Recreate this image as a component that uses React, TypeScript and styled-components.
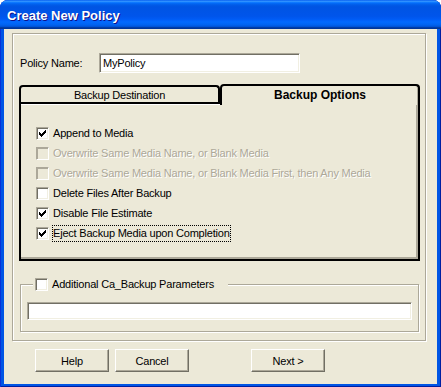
import React from 'react';
import styled, { createGlobalStyle } from 'styled-components';

const Global = createGlobalStyle`
  html, body { margin: 0; padding: 0; background: #fff; }
  body { font-family: "Liberation Sans", Arial, sans-serif; font-size: 11px; color: #000; letter-spacing: -0.2px; }
  * { box-sizing: border-box; }
`;

const Window = styled.div`
  width: 441px;
  height: 387px;
  display: flex;
  flex-direction: column;
  background: #0055e5;
  border-radius: 8px 8px 0 0;
  overflow: hidden;
  box-shadow: inset 1px 0 0 #0831d9, inset -1px 0 0 #001ea0, inset 0 -1px 0 #001ea0;
`;

const TitleBar = styled.div`
  height: 29px;
  flex: none;
  display: flex;
  align-items: center;
  padding: 1px 0 0 7px;
  color: #fff;
  font-family: "Liberation Sans", Arial, sans-serif;
  font-weight: 700;
  font-size: 13px;
  letter-spacing: 0;
  text-shadow: 1px 1px 0 #0f1089;
  background: linear-gradient(
    to bottom,
    #0058ee 0%,
    #3593ff 4%,
    #288eff 6%,
    #127dff 8%,
    #036ffc 10%,
    #0262ee 14%,
    #0057e5 20%,
    #0054e3 24%,
    #0055eb 56%,
    #005bf5 66%,
    #026afe 76%,
    #0062ef 86%,
    #0052d6 92%,
    #0040ab 94%,
    #003092 100%
  );
`;

const Body = styled.div`
  flex: 1;
  margin: 0 4px 3px 4px;
  background: #ece9d8;
  padding: 4px 11px 0 8px;
  display: flex;
  flex-direction: column;
`;

const Frame = styled.div`
  width: 414px;
  height: 308px;
  border: 1px solid #aca899;
  box-shadow: inset 1px 1px 0 #fff, 1px 1px 0 #fff;
  padding: 19px 6px 8px 6px;
  display: flex;
  flex-direction: column;
`;

const NameRow = styled.div`
  display: flex;
  align-items: center;
  height: 20px;
  padding-left: 1px;
  margin-bottom: 11px;
`;

const Label = styled.span`
  width: 79px;
  font-size: 11px;
`;

const TextBox = styled.div<{ $w: number; $h: number }>`
  width: ${p => p.$w}px;
  height: ${p => p.$h}px;
  background: #fff;
  border: 1px solid;
  border-color: #aca899 #fff #fff #aca899;
  box-shadow: inset 1px 1px 0 #716f64, inset -1px -1px 0 #f1efe2;
  padding: 0 3px;
  display: flex;
  align-items: center;
  font-size: 11px;
`;

const TabStrip = styled.div`
  display: grid;
  grid-template-columns: 201px 200px;
  align-items: end;
  height: 18px;
  position: relative;
  z-index: 1;
`;

const Tab = styled.div<{ $active?: boolean }>`
  height: ${p => (p.$active ? 21 : 17)}px;
  margin-bottom: ${p => (p.$active ? -3 : 0)}px;
  border: 2px solid #000;
  border-bottom: none;
  border-radius: 4px 4px 0 0;
  background: #ece9d8;
  display: flex;
  justify-content: center;
  align-items: ${p => (p.$active ? 'flex-start' : 'center')};
  padding-top: ${p => (p.$active ? 2 : 0)}px;
  font-weight: ${p => (p.$active ? 700 : 400)};
  font-size: ${p => (p.$active ? 12 : 11)}px;
  letter-spacing: ${p => (p.$active ? '0' : '-0.2px')};
  box-shadow: ${p => (p.$active ? 'inset -1px 0 0 #aca899' : 'none')};
`;

const Panel = styled.div`
  width: 401px;
  height: 159px;
  border: 2px solid #000;
  box-shadow: inset 0 1px 0 #fff, inset -2px -2px 0 #aca899;
  padding: 19px 0 0 15px;
  display: flex;
  flex-direction: column;
  margin-bottom: 23px;
`;

const CheckRow = styled.div`
  height: 20px;
  display: flex;
  align-items: center;
`;

const Box = styled.span<{ $disabled?: boolean }>`
  width: 13px;
  height: 13px;
  flex: none;
  background: ${p => (p.$disabled ? '#ece9d8' : '#fff')};
  border: 1px solid;
  border-color: #aca899 #fff #fff #aca899;
  box-shadow: ${p =>
    p.$disabled
      ? 'inset 1px 1px 0 #aca899, inset -1px -1px 0 #ece9d8'
      : 'inset 1px 1px 0 #716f64, inset -1px -1px 0 #f1efe2'};
  display: block;
  position: relative;
  svg { position: absolute; left: -1px; top: -1px; }
`;

const CheckText = styled.span<{ $disabled?: boolean; $focus?: boolean }>`
  margin-left: 3px;
  height: 17px;
  line-height: 15px;
  border: 1px dotted ${p => (p.$focus ? '#000' : 'transparent')};
  white-space: nowrap;
  font-size: 11px;
  color: ${p => (p.$disabled ? '#aca899' : '#000')};
  text-shadow: ${p => (p.$disabled ? '1px 1px 0 #fff' : 'none')};
`;

const Group = styled.div`
  width: 399px;
  height: 48px;
  margin-left: 1px;
  border: 1px solid #aca899;
  box-shadow: inset 1px 1px 0 #fff, 1px 1px 0 #fff;
  display: flex;
  flex-direction: column;
`;

const Legend = styled.div`
  align-self: flex-start;
  margin: -8px 0 0 12px;
  padding: 0 13px 0 2px;
  height: 15px;
  background: #ece9d8;
  display: flex;
  align-items: center;
  margin-bottom: 10px;
`;

const GroupInput = styled(TextBox)`
  margin-left: 6px;
`;

const ButtonRow = styled.div`
  display: flex;
  margin-top: 8px;
  padding-left: 23px;
`;

const Button = styled.div<{ $gap?: number }>`
  width: 74px;
  height: 23px;
  margin-left: ${p => p.$gap ?? 0}px;
  border: 1px solid;
  border-color: #fff #716f64 #716f64 #fff;
  box-shadow: inset -1px -1px 0 #aca899;
  background: #ece9d8;
  display: flex;
  align-items: center;
  justify-content: center;
  font-size: 11px;
`;

const CheckMark = () => (
  <svg width="13" height="13" viewBox="0 0 13 13" shapeRendering="crispEdges">
    <g fill="#000">
      <rect x="3" y="5" width="1" height="3" />
      <rect x="4" y="6" width="1" height="3" />
      <rect x="5" y="7" width="1" height="3" />
      <rect x="6" y="6" width="1" height="3" />
      <rect x="7" y="5" width="1" height="3" />
      <rect x="8" y="4" width="1" height="3" />
      <rect x="9" y="3" width="1" height="3" />
    </g>
  </svg>
);

type Opt = { label: string; checked?: boolean; disabled?: boolean; focus?: boolean };

const options: Opt[] = [
  { label: 'Append to Media', checked: true },
  { label: 'Overwrite Same Media Name, or Blank Media', disabled: true },
  { label: 'Overwrite Same Media Name, or Blank Media First, then Any Media', disabled: true },
  { label: 'Delete Files After Backup' },
  { label: 'Disable File Estimate', checked: true },
  { label: 'Eject Backup Media upon Completion', checked: true, focus: true },
];

export default function App() {
  return (
    <>
      <Global />
      <Window>
        <TitleBar>Create New Policy</TitleBar>
        <Body>
          <Frame>
            <NameRow>
              <Label>Policy Name:</Label>
              <TextBox $w={201} $h={20}>MyPolicy</TextBox>
            </NameRow>
            <TabStrip>
              <Tab>Backup Destination</Tab>
              <Tab $active>Backup Options</Tab>
            </TabStrip>
            <Panel>
              {options.map(o => (
                <CheckRow key={o.label}>
                  <Box $disabled={o.disabled}>{o.checked && <CheckMark />}</Box>
                  <CheckText $disabled={o.disabled} $focus={o.focus}>
                    {o.label}
                  </CheckText>
                </CheckRow>
              ))}
            </Panel>
            <Group>
              <Legend>
                <Box />
                <CheckText>Additional Ca_Backup Parameters</CheckText>
              </Legend>
              <GroupInput $w={385} $h={18} />
            </Group>
          </Frame>
          <ButtonRow>
            <Button>Help</Button>
            <Button $gap={6}>Cancel</Button>
            <Button $gap={62}>Next &gt;</Button>
          </ButtonRow>
        </Body>
      </Window>
    </>
  );
}
